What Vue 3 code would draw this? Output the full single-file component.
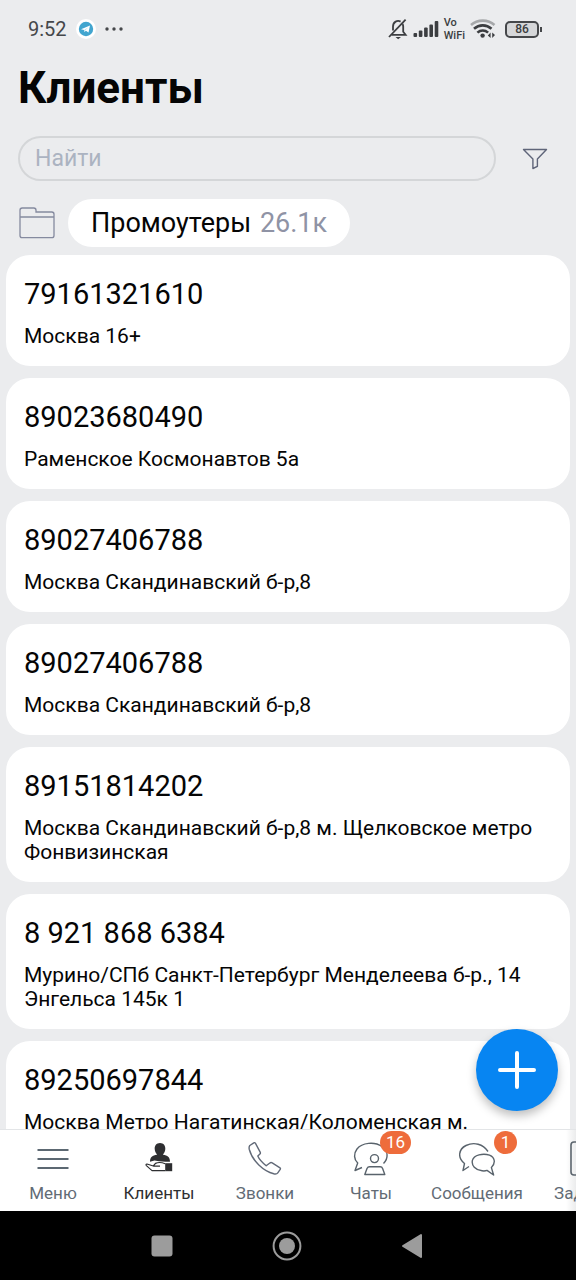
<script setup>
import { ref } from 'vue'

const query = ref('')

const clients = [
  { phone: '79161321610', address: 'Москва 16+' },
  { phone: '89023680490', address: 'Раменское Космонавтов 5а' },
  { phone: '89027406788', address: 'Москва Скандинавский б-р,8' },
  { phone: '89027406788', address: 'Москва Скандинавский б-р,8' },
  { phone: '89151814202', address: 'Москва Скандинавский б-р,8 м. Щелковское метро Фонвизинская' },
  { phone: '8 921 868 6384', address: 'Мурино/СПб Санкт-Петербург Менделеева б-р., 14 Энгельса 145к 1' },
  { phone: '89250697844', address: 'Москва Метро Нагатинская/Коломенская м.' },
]

const tabs = [
  { id: 'menu', label: 'Меню' },
  { id: 'clients', label: 'Клиенты', active: true },
  { id: 'calls', label: 'Звонки' },
  { id: 'chats', label: 'Чаты', badge: 16 },
  { id: 'messages', label: 'Сообщения', badge: 1 },
  { id: 'tasks', label: 'Задачи' },
]
</script>

<template>
  <div class="screen">
    <div class="status">
      <span class="time">9:52</span>
      <svg class="telegram" width="20" height="20" viewBox="0 0 20 20">
        <circle cx="10" cy="10" r="10" fill="#fff" />
        <circle cx="10" cy="10" r="7.2" fill="#42a5cf" />
        <path d="M5 10.2 14 6.5 12.5 13.6 9.9 11.8 8.4 13 8.1 10.9Z" fill="#fff" />
        <path d="M8.2 11 12.4 8.2 9.3 11.3 8.5 12.8Z" fill="#b5dcec" />
      </svg>
      <svg class="dots" width="18" height="4" viewBox="0 0 18 4" fill="#45474a">
        <circle cx="2" cy="2" r="1.7" /><circle cx="9" cy="2" r="1.7" /><circle cx="16" cy="2" r="1.7" />
      </svg>
      <div class="indicators">
        <svg width="20" height="22" viewBox="0 0 20 22" fill="none" stroke="#3c3e41" stroke-width="1.8">
          <path d="M3.5 16.8H17.6L15.2 13.8V8.6C15.2 7.6 15 6.7 14.6 6M12.6 3.6C9.4 1.8 5 3.8 5 8.6V12.4" />
          <path d="M1 19 17.6 1.6" />
          <path d="M7.5 19H13L10.2 21.2Z" fill="#3c3e41" stroke="none" />
        </svg>
        <svg width="26" height="18" viewBox="0 0 26 18" fill="#3c3e41">
          <rect x="0.5" y="13" width="3.6" height="4" rx="1" />
          <rect x="5.8" y="10.5" width="3.6" height="6.5" rx="1" />
          <rect x="11.1" y="7.5" width="3.6" height="9.5" rx="1" />
          <rect x="16.4" y="4.5" width="3.6" height="12.5" rx="1" />
          <rect x="21.7" y="1" width="3.6" height="16" rx="1" />
        </svg>
        <span class="vowifi"><span>Vo</span><span>WiFi</span></span>
        <svg width="26" height="20" viewBox="0 0 26 20" fill="none" stroke-width="2.6">
          <path d="M1 6C7.5 .2 18 .2 24.5 6" stroke="#a6a8aa" />
          <path d="M4 9.8C9 5.2 16.5 5.2 21.5 9.8" stroke="#3c3e41" />
          <path d="M7.4 13.6C10.5 10.8 15 10.8 18.1 13.6" stroke="#3c3e41" />
          <circle cx="12.6" cy="16.6" r="2.2" fill="#3c3e41" />
          <path d="M20.6 13.6V19L17.8 16.6ZM22.2 13.6V19L25 16Z" fill="#3c3e41" />
        </svg>
        <span class="battery">86</span>
      </div>
    </div>

    <header class="header">
      <h1>Клиенты</h1>
      <div class="search">
        <input v-model="query" type="text" placeholder="Найти" aria-label="Найти" />
        <button class="plain" type="button" aria-label="Фильтр">
          <svg width="26" height="22" viewBox="0 0 26 22" fill="none" stroke="#5f6579" stroke-width="1.4" stroke-linejoin="round">
            <path d="M1.5 1.5H24.5L15.4 11V18.3L10.9 20.5V11Z" />
          </svg>
        </button>
      </div>
      <div class="folders">
        <button class="plain" type="button" aria-label="Папки">
          <svg width="36" height="32" viewBox="0 0 36 32" fill="none" stroke="#858a9f" stroke-width="1.3">
            <path d="M1 28.5V3.2Q1 1 3.2 1H14.8Q17 1 17 3.2V5H32.8Q35 5 35 7.2V28.5Q35 30.7 32.8 30.7H3.2Q1 30.7 1 28.5ZM1 10H35" />
          </svg>
        </button>
        <button class="chip" type="button">Промоутеры <span>26.1к</span></button>
      </div>
    </header>

    <main class="content">
      <ul class="list">
        <li v-for="(client, i) in clients" :key="i" class="card">
          <h2>{{ client.phone }}</h2>
          <p>{{ client.address }}</p>
        </li>
      </ul>
      <button class="fab" type="button" aria-label="Добавить">
        <svg width="40" height="40" viewBox="0 0 40 40" stroke="#fff" stroke-width="4" stroke-linecap="round">
          <path d="M20 3V37M3 20H37" />
        </svg>
      </button>
    </main>

    <nav class="tabs">
      <a v-for="tab in tabs" :key="tab.id" href="#" class="tab" :class="{ active: tab.active }">
        <span class="icon">
          <svg v-if="tab.id === 'menu'" width="36" height="36" viewBox="0 0 36 36" fill="none" stroke="#5c6872" stroke-width="2">
            <path d="M2.5 9H33.5M2.5 18H33.5M2.5 27H33.5" />
          </svg>
          <svg v-else-if="tab.id === 'clients'" width="36" height="36" viewBox="0 0 36 36">
            <path d="M19 2C22.7 2 24.5 4.8 24.3 8C24.1 10.6 23.3 12 22.1 13.2V13.8C26.5 14.4 29 16 29 20.8H24.5L18 20.2 13.5 19.6 9 20.8C9 16 11.5 14.4 15.9 13.8V13.2C14.7 12 13.9 10.6 13.7 8C13.5 4.8 15.3 2 19 2Z" fill="#2e2f31" />
            <path d="M24.2 22.2H31.2V30.2H24.2Z" fill="#2e2f31" />
            <path d="M24.2 22.8C21 21.4 17.5 21 14.5 22.4L12.3 25 6 23Q4.4 23.2 5.4 24.6L11 29.6H24.2M12.3 25.2H19" fill="none" stroke="#2e2f31" stroke-width="1.2" stroke-linejoin="round" />
          </svg>
          <svg v-else-if="tab.id === 'calls'" width="36" height="36" viewBox="0 0 36 36" fill="none" stroke="#626a78" stroke-width="1.4" stroke-linejoin="round">
            <path d="M2.8 4.5L6.8 1.8Q7.8 1.2 8.5 2.4L13.3 11.4Q13.7 12.4 12.7 13.2L10.8 15Q12.5 19.2 19.2 24.8L22.5 22.2Q23.9 21 25.2 21.8L33 26.8Q33.8 27.5 33.2 28.4L30.8 31.8Q29.7 33.4 26.8 32.8C16.5 30 5.4 20 2.3 8.5Q1.7 5.8 2.8 4.5Z" />
          </svg>
          <svg v-else-if="tab.id === 'chats'" width="36" height="36" viewBox="0 0 36 36" fill="none" stroke="#59636c" stroke-width="1.4" stroke-linejoin="round">
            <path d="M9 26.5L2 29.5L4.7 22C.8 18.5 .5 12.5 4 8C9 1.5 21.5.3 29 5.5C35.5 10 35.5 17.5 30.5 22.5" />
            <circle cx="21.5" cy="17.6" r="4" />
            <path d="M11.8 33.5L14 27.5Q14.8 25.8 16.5 25.8H27.2Q29 25.8 29.6 27.5L31.8 33.5Z" />
          </svg>
          <svg v-else-if="tab.id === 'messages'" width="36" height="36" viewBox="1 0 36 36" fill="none" stroke="#59636c" stroke-width="1.4" stroke-linejoin="round">
            <path d="M11 25.5L5 29.5L6.5 22.5C-1 16.5 .8 8 8 4.5C16 .7 25 3 30 10.5" />
            <path d="M33.4 26.6C37.6 22.5 37.4 16.6 31.5 14.2C25 11.8 15.8 14 14.4 19.4C13.3 24.6 17.3 28.8 24 29.8Q27 30.2 29 29.4L35.6 34L33.4 26.6Z" />
          </svg>
          <svg v-else width="26" height="36" viewBox="0 0 26 36" fill="none" stroke="#59636c" stroke-width="1.6">
            <rect x="1" y="1" width="24" height="33" rx="3" />
          </svg>
          <span v-if="tab.badge" class="badge">{{ tab.badge }}</span>
        </span>
        <span class="label">{{ tab.label }}</span>
      </a>
    </nav>

    <div class="system">
      <button class="plain" type="button" aria-label="Недавние">
        <svg width="30" height="30" viewBox="0 0 30 30"><rect x="4.5" y="4.5" width="21" height="21" rx="3" fill="#9c9c9c" /></svg>
      </button>
      <button class="plain" type="button" aria-label="Домой">
        <svg width="30" height="30" viewBox="0 0 30 30" fill="#9c9c9c">
          <circle cx="15" cy="15" r="13.4" fill="none" stroke="#9c9c9c" stroke-width="2" /><circle cx="15" cy="15" r="8" />
        </svg>
      </button>
      <button class="plain" type="button" aria-label="Назад">
        <svg width="30" height="30" viewBox="0 0 30 30"><path d="M6 15 24 4V26Z" fill="#9c9c9c" stroke="#9c9c9c" stroke-width="2" stroke-linejoin="round" /></svg>
      </button>
    </div>
  </div>
</template>

<style scoped>
.screen {
  display: flex;
  flex-direction: column;
  height: 100vh;
  overflow: hidden;
  background: #ebecee;
  color: #050505;
  font-family: Roboto, "Noto Sans", sans-serif;
}
svg { display: block; flex: none; }
button { font: inherit; color: inherit; border: 0; cursor: pointer; }
.plain { padding: 0; background: none; }

.status {
  display: flex;
  align-items: center;
  height: 58px;
  padding: 0 37px 0 28px;
  flex: none;
}
.time { font-size: 20px; color: #45474a; }
.telegram { margin-left: 9px; }
.dots { margin-left: 9px; }
.indicators {
  display: flex;
  align-items: center;
  gap: 5px;
  margin-left: auto;
}
.vowifi {
  display: flex;
  flex-direction: column;
  font-size: 11px;
  line-height: 13px;
  font-weight: 500;
  color: #3c3e41;
}
.battery {
  position: relative;
  width: 34px;
  height: 17px;
  margin-left: 4px;
  box-sizing: border-box;
  border: 2px solid #45474a;
  border-radius: 5px;
  background: #d6d7d9;
  color: #3c3e41;
  font-size: 12px;
  line-height: 13px;
  font-weight: 500;
  text-align: center;
}
.battery::after {
  content: "";
  position: absolute;
  top: 4px;
  right: -5px;
  width: 2px;
  height: 5px;
  background: #45474a;
}

.header { padding: 0 18px; flex: none; }
h1 {
  margin: 0;
  font-size: 44px;
  line-height: 60px;
  font-weight: 700;
}
.search {
  display: flex;
  align-items: center;
  gap: 26px;
  margin-top: 18px;
  padding-right: 10px;
}
.search input {
  flex: 1;
  min-width: 0;
  height: 45px;
  box-sizing: border-box;
  padding: 0 15px;
  border: 2px solid #d4d6d8;
  border-radius: 23px;
  outline: 0;
  background: transparent;
  font: inherit;
  font-size: 23px;
}
.search input::placeholder { color: #abb3c1; opacity: 1; }
.folders {
  display: flex;
  align-items: center;
  gap: 13px;
  margin-top: 18px;
  padding-left: 1px;
}
.chip {
  height: 48px;
  padding: 0 23px;
  border-radius: 24px;
  background: #fff;
  font-size: 27px;
}
.chip span { margin-left: 2px; color: #8f93a5; }

.content {
  position: relative;
  flex: 1;
  min-height: 0;
  overflow: hidden;
  padding: 8px 6px 0;
}
.list {
  display: flex;
  flex-direction: column;
  gap: 12px;
  margin: 0;
  padding: 0;
  list-style: none;
}
.card {
  padding: 21px 18px 18px;
  border-radius: 24px;
  background: #fff;
}
.card h2 {
  margin: 0 0 12px;
  font-size: 29px;
  line-height: 36px;
  font-weight: 400;
}
.card p {
  margin: 0;
  font-size: 21px;
  line-height: 24px;
}
.fab {
  position: absolute;
  right: 18px;
  bottom: 18px;
  display: grid;
  place-items: center;
  width: 82px;
  height: 82px;
  padding: 0;
  border-radius: 50%;
  background: #0785f2;
  box-shadow: 0 5px 10px rgba(0, 0, 0, 0.25);
}

.tabs {
  position: relative;
  display: flex;
  flex: none;
  height: 82px;
  box-sizing: border-box;
  border-top: 1px solid #e3e5e7;
  overflow: hidden;
  background: #fff;
}
.tabs::after {
  content: "";
  position: absolute;
  top: 0;
  right: 0;
  width: 10px;
  height: 100%;
  background: linear-gradient(to right, rgba(120, 125, 130, 0), rgba(120, 125, 130, 0.15));
}
.tab {
  display: flex;
  flex-direction: column;
  align-items: center;
  flex: 0 0 106px;
  padding-top: 11px;
  color: #626b75;
  text-decoration: none;
}
.tab.active { color: #2e2f31; }
.icon { position: relative; height: 36px; }
.label { margin-top: 5px; font-size: 17px; line-height: 22px; }
.badge {
  position: absolute;
  top: -10px;
  right: -22px;
  min-width: 23px;
  height: 23px;
  box-sizing: border-box;
  padding: 0 6px;
  border-radius: 12px;
  background: #ee6c3b;
  color: #fff;
  font-size: 17px;
  line-height: 23px;
  text-align: center;
}

.system {
  display: flex;
  align-items: center;
  justify-content: space-between;
  flex: none;
  height: 69px;
  padding: 0 149px 0 147px;
  background: #000;
}
</style>

<style>
body { background: #ebecee; }
</style>
